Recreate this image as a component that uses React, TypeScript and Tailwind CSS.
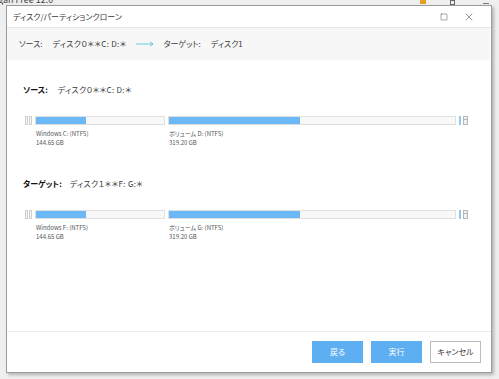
import { Square, X } from 'lucide-react';

type Part = { label: string; size: string; width: number; used: number };

function DiskBar({ parts }: { parts: Part[] }) {
  return (
    <div className="pl-[18px]">
      <div className="flex items-start">
        {/* 左端の小さいブロック */}
        <div className="flex gap-[1px] mr-[3px]">
          <div className="w-[3px] h-[9px] border border-[#d0d0d0] bg-[#f4f4f4]" />
          <div className="w-[3px] h-[9px] border border-[#d0d0d0] bg-[#f4f4f4]" />
        </div>
        {parts.map((p) => (
          <div key={p.label} className="mr-[3px]" style={{ width: p.width }}>
            <div className="h-[9px] border border-[#e0e0e0] bg-[#f8f8f8] flex">
              <div className="h-full bg-[#6cb8f6]" style={{ width: p.used }} />
            </div>
            <div className="mt-[4px] pl-[1px] text-[6px] leading-[9px] text-[#555]">
              <div>{p.label}</div>
              <div>{p.size}</div>
            </div>
          </div>
        ))}
        <div className="w-[2px] h-[9px] bg-[#8ec8f5] mr-[2px]" />
        <div className="w-[5px] h-[9px] border border-[#b8b8b8] bg-[#f0f0f0] flex flex-col">
          <div className="h-[3px] border-b border-[#b8b8b8]" />
        </div>
      </div>
    </div>
  );
}

export default function App() {
  return (
    <div className="w-[499px] h-[379px] bg-[#efefef] overflow-hidden text-[#3a3a3a] font-['Noto_Sans_CJK_JP','Liberation_Sans',sans-serif] [font-feature-settings:'palt']">
      {/* 背後のウィンドウ */}
      <div className="h-[5px] overflow-hidden relative flex">
        <div className="text-[9px] leading-[10px] -mt-[5px] ml-[-2px] text-[#444]">gan Free 12.0</div>
        <div className="absolute left-[420px] top-0 w-[6px] h-[4px] bg-[#e5a020]" />
        <div className="absolute left-[450px] top-0 w-[5px] h-[5px] border border-[#666]" />
        <div className="absolute left-[483px] top-[3px] w-[6px] h-[1px] bg-[#777]" />
      </div>

      {/* ダイアログ */}
      <div className="ml-[6px] w-[486px] h-[368px] border border-[#9c9c9c] bg-white shadow-[2px_2px_3px_rgba(0,0,0,0.25)] flex flex-col">
        <div className="h-[22px] flex items-center justify-between border-b border-[#e6e6e6] pl-[6px] pr-[16px]">
          <span className="text-[8px]">ディスク/パーティションクローン</span>
          <div className="flex items-center gap-[15px]">
            <Square size={8} strokeWidth={1.3} className="text-[#333]" />
            <X size={12} strokeWidth={1} className="text-[#333]" />
          </div>
        </div>

        <div className="h-[32px] bg-[#f7f7f7] mr-[1px] flex items-center pl-[12px] text-[8px]">
          <span>ソース:</span>
          <span className="ml-[10px] tracking-[0.3px]">ディスク０＊＊C: D:＊</span>
          <svg width="18" height="6" viewBox="0 0 18 6" className="ml-[9px]">
            <path d="M0 3 H17 M14 0.8 L17 3 L14 5.2" stroke="#5ec2d6" strokeWidth="0.9" fill="none" />
          </svg>
          <span className="ml-[10px]">ターゲット:</span>
          <span className="ml-[10px]">ディスク1</span>
        </div>

        <div className="flex-1">
          <div className="mt-[25px] pl-[16px] text-[8px] leading-[10px] flex">
            <span className="font-bold text-[#111]">ソース:</span>
            <span className="ml-[10px] tracking-[0.3px]">ディスク０＊＊C: D:＊</span>
          </div>
          <div className="mt-[21px]">
            <DiskBar
              parts={[
                { label: 'Windows C: (NTFS)', size: '144.65 GB', width: 130, used: 50 },
                { label: 'ボリューム D: (NTFS)', size: '319.20 GB', width: 288, used: 131 },
              ]}
            />
          </div>

          <div className="mt-[32px] pl-[16px] text-[8px] leading-[10px] flex">
            <span className="font-bold text-[#111]">ターゲット:</span>
            <span className="ml-[8px] tracking-[0.3px]">ディスク１＊＊F: G:＊</span>
          </div>
          <div className="mt-[21px]">
            <DiskBar
              parts={[
                { label: 'Windows F: (NTFS)', size: '144.65 GB', width: 130, used: 50 },
                { label: 'ボリューム G: (NTFS)', size: '319.20 GB', width: 288, used: 131 },
              ]}
            />
          </div>
        </div>

        <div className="h-[41px] border-t border-[#ececec] flex items-center justify-end gap-[8px] pr-[10px] pb-[1px]">
          <button className="w-[51px] h-[22px] bg-[#5eaef2] text-white text-[8px]">戻る</button>
          <button className="w-[51px] h-[22px] bg-[#5eaef2] text-white text-[8px]">実行</button>
          <button className="w-[51px] h-[22px] bg-white border border-[#bdbdbd] text-[8px]">キャンセル</button>
        </div>
      </div>
    </div>
  );
}
